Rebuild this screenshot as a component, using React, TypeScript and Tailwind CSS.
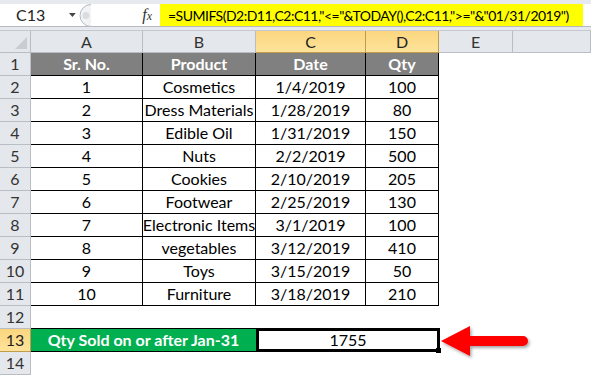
import React from 'react';

const cols = [
  { key: 'A', w: 'w-[112px]' },
  { key: 'B', w: 'w-[113px]' },
  { key: 'C', w: 'w-[110px]' },
  { key: 'D', w: 'w-[73px]' },
  { key: 'E', w: 'w-[74px]' },
  { key: 'F', w: 'flex-1' },
];

const data = [
  ['1', 'Cosmetics', '1/4/2019', '100'],
  ['2', 'Dress Materials', '1/28/2019', '80'],
  ['3', 'Edible Oil', '1/31/2019', '150'],
  ['4', 'Nuts', '2/2/2019', '500'],
  ['5', 'Cookies', '2/10/2019', '205'],
  ['6', 'Footwear', '2/25/2019', '130'],
  ['7', 'Electronic Items', '3/1/2019', '100'],
  ['8', 'vegetables', '3/12/2019', '410'],
  ['9', 'Toys', '3/15/2019', '50'],
  ['10', 'Furniture', '3/18/2019', '210'],
];

const font = { fontFamily: 'Lato, "Open Sans", sans-serif' };

function RowHead({ n, active }: { n: number; active?: boolean }) {
  return (
    <div
      className={`flex h-[23px] w-[31px] shrink-0 items-center justify-center border-b border-r text-[16px] ${
        active
          ? 'border-[#c29b4b] bg-gradient-to-b from-[#fbd67f] to-[#fde39a] text-[#222]'
          : 'border-[#b9bdc4] bg-[#e4e7eb] text-[#333]'
      }`}
    >
      {n}
    </div>
  );
}

function Cell({ w, children, className = '' }: { w: string; children?: React.ReactNode; className?: string }) {
  return (
    <div className={`flex h-[23px] shrink-0 items-center justify-center whitespace-nowrap text-[16px] ${w} ${className}`}>
      {children}
    </div>
  );
}

export default function App() {
  return (
    <div className="relative h-[377px] w-[591px] overflow-hidden bg-white" style={font}>
      {/* formula bar */}
      <div className="h-[4px] bg-[#e6e9ed]" />
      <div className="flex h-[23px] items-center border-b border-[#b5b9bf] bg-white">
        <div className="flex w-[76px] shrink-0 items-center">
          <span className="ml-[16px] text-[16px] text-[#222]">C13</span>
          <svg className="ml-[24px]" width="7" height="4" viewBox="0 0 7 4">
            <path d="M0 0 L7 0 L3.5 4 Z" fill="#444" />
          </svg>
        </div>
        <svg width="16" height="23" viewBox="0 0 16 23" className="shrink-0">
          <path d="M15 0.5 A11 11 0 0 0 15 22.5" fill="#f2f3f5" stroke="#b5b9bf" />
          <circle cx="10" cy="11.5" r="3.5" fill="#d9dce0" />
        </svg>
        <div className="flex w-[68px] shrink-0 items-center justify-end pr-[8px]">
          <span className="text-[16px] italic text-[#333]" style={{ fontFamily: '"Liberation Serif", serif' }}>
            f<span className="text-[12px]">x</span>
          </span>
        </div>
        <div className="flex h-[22px] w-[423px] shrink-0 items-center overflow-hidden whitespace-nowrap bg-[#ffff00] pl-[8px] text-[14px] tracking-[-0.5px] text-black">
          =SUMIFS(D2:D11,C2:C11,"&lt;="&amp;TODAY(),C2:C11,"&gt;="&amp;"01/31/2019")
        </div>
      </div>
      <div className="h-[3px] bg-[#e6e9ed]" />

      {/* column headers */}
      <div className="flex h-[23px] border-t border-[#c5c9cf]">
        <div className="relative w-[31px] shrink-0 border-b border-r border-[#b9bdc4] bg-[#e4e7eb]">
          <svg className="absolute bottom-[3px] right-[3px]" width="12" height="12" viewBox="0 0 12 12">
            <path d="M12 0 L12 12 L0 12 Z" fill="#c9cdd2" />
          </svg>
        </div>
        {cols.map((c) => {
          const sel = c.key === 'C' || c.key === 'D';
          return (
            <div
              key={c.key}
              className={`flex shrink-0 items-center justify-center border-b border-r text-[16px] ${c.w} ${
                sel
                  ? 'border-[#c29b4b] bg-gradient-to-b from-[#fbd67f] to-[#fde39a] text-[#222]'
                  : 'border-[#b9bdc4] bg-[#e4e7eb] text-[#333]'
              }`}
            >
              {c.key === 'F' ? '' : c.key}
            </div>
          );
        })}
      </div>

      {/* row 1 header */}
      <div className="flex">
        <RowHead n={1} />
        {['Sr. No.', 'Product', 'Date', 'Qty'].map((h, i) => (
          <Cell key={h} w={cols[i].w} className="border-b border-r border-black bg-[#808080] font-bold text-white">
            {h}
          </Cell>
        ))}
      </div>

      {data.map((r, ri) => (
        <div key={ri} className="flex">
          <RowHead n={ri + 2} />
          {r.map((v, i) => (
            <Cell key={i} w={cols[i].w} className="border-b border-r border-black text-black">
              {v}
            </Cell>
          ))}
        </div>
      ))}

      <div className="flex">
        <RowHead n={12} />
      </div>

      <div className="flex">
        <RowHead n={13} active />
        <Cell w="w-[225px]" className="-mt-px h-[24px] border-y border-black bg-[#00b050] font-bold text-white">
          Qty Sold on or after Jan-31
        </Cell>
        <div className="relative -mt-[1px] flex h-[24px] w-[184px] shrink-0 items-center justify-center border-[3px] border-black text-[16px] text-black">
          1755
          <div className="absolute -bottom-[4px] -right-[4px] h-[5px] w-[5px] bg-black" />
        </div>
      </div>

      <div className="flex">
        <RowHead n={14} />
      </div>

      {/* arrow */}
      <svg className="absolute left-[441px] top-[326px]" width="92" height="34" viewBox="0 0 92 34">
        <defs>
          <filter id="sh" x="-10%" y="-20%" width="130%" height="160%">
            <feDropShadow dx="1.5" dy="2" stdDeviation="1.5" floodColor="#000" floodOpacity="0.35" />
          </filter>
        </defs>
        <g filter="url(#sh)">
          <path d="M0 15 L29 0 L29 10 L82 10 A5 5 0 0 1 82 20 L29 20 L29 30 Z" fill="#ff0000" />
        </g>
      </svg>
    </div>
  );
}
